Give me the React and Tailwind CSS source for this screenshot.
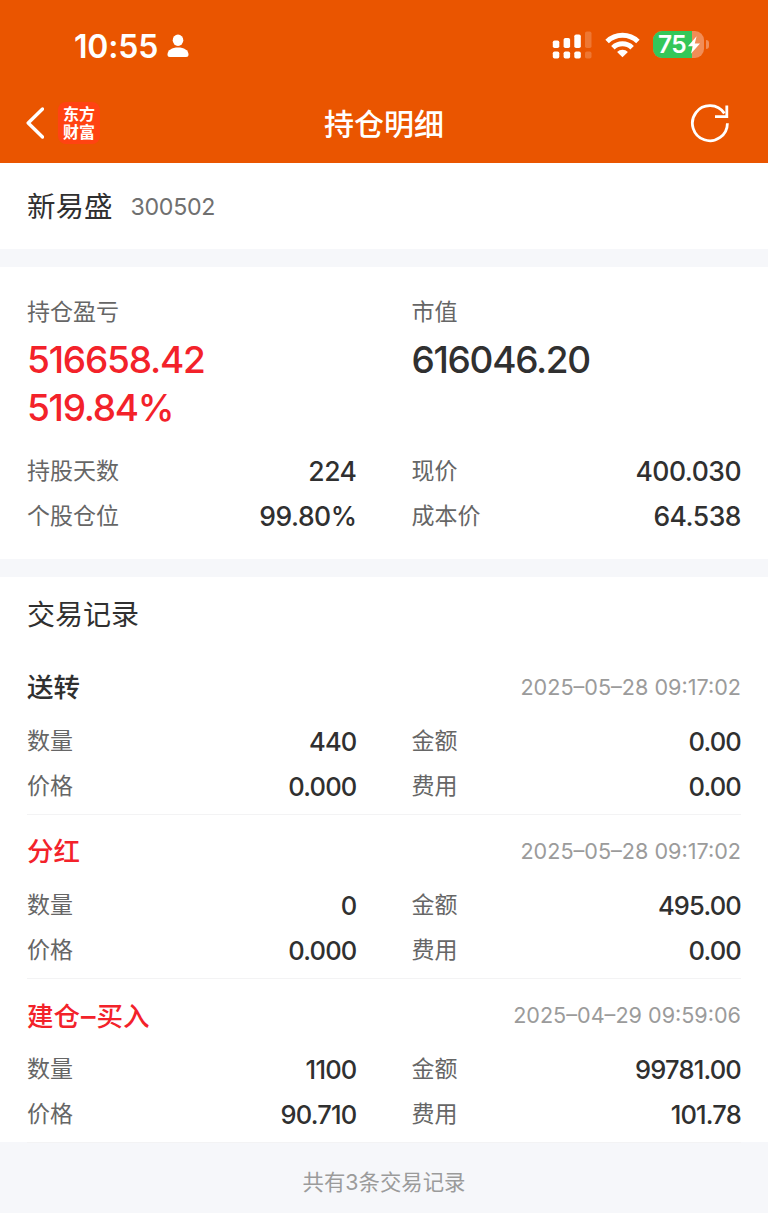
const resumen = [
  { label: '持股天数', valor: '224' },
  { label: '现价', valor: '400.030' },
  { label: '个股仓位', valor: '99.80%' },
  { label: '成本价', valor: '64.538' },
];

const registros = [
  {
    id: 1,
    tipo: '送转',
    rojo: false,
    fecha: '2025–05–28 09:17:02',
    cantidad: '440',
    importe: '0.00',
    precio: '0.000',
    comision: '0.00',
  },
  {
    id: 2,
    tipo: '分红',
    rojo: true,
    fecha: '2025–05–28 09:17:02',
    cantidad: '0',
    importe: '495.00',
    precio: '0.000',
    comision: '0.00',
  },
  {
    id: 3,
    tipo: '建仓–买入',
    rojo: true,
    fecha: '2025–04–29 09:59:06',
    cantidad: '1100',
    importe: '99781.00',
    precio: '90.710',
    comision: '101.78',
  },
];

function StatusBar() {
  return (
    <div className="flex h-[84px] items-center pt-2 pr-[59px] pl-[74px]">
      <span className="pt-px text-[32px] leading-none font-semibold tracking-[-0.2px]">10:55</span>
      <svg className="ml-[9px] h-6 w-[22px]" viewBox="0 0 22 24" fill="currentColor">
        <ellipse cx="11" cy="6.2" rx="5.3" ry="5.7" />
        <path d="M0.5 20.5C0.5 16.3 5 13.6 11 13.6s10.5 2.7 10.5 6.9c0 1.7-.8 2.5-2.4 2.5H2.9C1.3 23 .5 22.2.5 20.5Z" />
      </svg>

      <div className="mb-[3px] ml-auto flex items-center">
        <svg className="h-7 w-10" viewBox="0 0 40 28" fill="currentColor">
          <rect x="0.8" y="9.5" width="6.5" height="7.5" rx="1.8" />
          <rect x="11.6" y="7" width="6.5" height="10" rx="1.8" />
          <rect x="22.3" y="3.5" width="6.5" height="13.5" rx="1.8" />
          <rect x="0.8" y="20.5" width="6.5" height="7" rx="1.8" />
          <rect x="11.6" y="20.5" width="6.5" height="7" rx="1.8" />
          <rect x="22.3" y="20.5" width="6.5" height="7" rx="1.8" />
          <rect x="33" y="0.5" width="6.5" height="16.5" rx="1.8" opacity="0.2" />
          <rect x="33" y="20.5" width="6.5" height="7" rx="1.8" opacity="0.2" />
        </svg>

        <svg className="ml-[13px] h-[26px] w-[35px]" viewBox="0 0 35 26" fill="none">
          <g stroke="currentColor" strokeWidth="5">
            <path d="M2.1 9.5a22.2 22.2 0 0 1 30.8 0" />
            <path d="M7.9 15.8a13.7 13.7 0 0 1 19.2 0" />
          </g>
          <path d="M17.5 25.2l-5.4-5.2a7.7 7.7 0 0 1 10.8 0Z" fill="currentColor" />
        </svg>

        <div className="relative ml-[13px] flex h-[27px] w-[51px] items-center rounded-[9px] bg-[#f18d57]">
          <div className="flex h-full w-[38.5px] items-center rounded-l-[9px] bg-[#34c759] pl-[5px]">
            <span className="text-[24.5px] leading-[27px] font-semibold tracking-[-0.6px]">75</span>
          </div>
          <svg className="absolute top-[5px] left-[34px] h-[18px] w-[14px]" viewBox="0 0 14 18">
            <path d="M9.6 0.3 0.9 10.2h4.9L3.9 17.7 13 7.5H7.8Z" fill="currentColor" />
          </svg>
        </div>
        <div className="ml-[2px] h-[9px] w-[3px] rounded-r-full bg-[#f18d57]" />
      </div>
    </div>
  );
}

function NavBar() {
  return (
    <div className="grid h-[78px] grid-cols-3 items-center px-[38px]">
      <div className="-ml-3 flex items-center">
        <svg className="h-8 w-[18px]" viewBox="0 0 18 32" fill="none" stroke="currentColor">
          <path d="M16.5 2 2.2 16l14.3 14" strokeWidth="3.4" strokeLinecap="round" strokeLinejoin="round" />
        </svg>
        <div className="ml-[14px] flex h-[42px] w-[42px] flex-col items-center justify-center rounded-[8px] bg-[#ff4312] pb-px text-[16px] leading-[18px] font-bold">
          <span>东方</span>
          <span>财富</span>
        </div>
      </div>
      <h1 className="pt-[2px] text-center text-[30px] leading-none font-medium whitespace-nowrap">持仓明细</h1>
      <svg className="ml-auto h-10 w-10" viewBox="0 0 40 40" fill="none" stroke="currentColor" strokeWidth="2.8">
        <path d="M37.4 20.2A17.5 17.5 0 1 1 34.4 10.4" />
        <path d="M36.8 2.4v11.2H25" />
      </svg>
    </div>
  );
}

function Fila({ label, valor, grande }) {
  return (
    <div className="flex h-[45px] items-center justify-between">
      <span className="text-[23px] leading-none text-[#666]">{label}</span>
      <span
        className={
          grande
            ? 'text-[26.5px] leading-none font-medium tracking-[-0.5px] text-[#303030]'
            : 'text-[25.5px] leading-none font-medium tracking-[-0.8px] text-[#303030]'
        }
      >
        {valor}
      </span>
    </div>
  );
}

function Registro({ registro }) {
  const [inicio, fin] = registro.tipo.split('–');

  return (
    <li className="h-[164px] border-b border-[#f3f3f4] pt-1">
      <div className="flex h-16 items-center justify-between">
        <span
          className={
            registro.rojo
              ? 'text-[26.5px] leading-none font-medium text-[#f3222a]'
              : 'text-[26.5px] leading-none font-medium text-[#303030]'
          }
        >
          {inicio}
          {fin && <span className="px-px text-[29px] leading-none">–</span>}
          {fin}
        </span>
        <span className="pt-[2px] text-[21.6px] leading-none text-[#9b9b9b]">{registro.fecha}</span>
      </div>
      <div className="grid grid-cols-2 gap-x-[55px]">
        <Fila label="数量" valor={registro.cantidad} />
        <Fila label="金额" valor={registro.importe} />
        <Fila label="价格" valor={registro.precio} />
        <Fila label="费用" valor={registro.comision} />
      </div>
    </li>
  );
}

export default function App() {
  return (
    <div className="flex h-[1213px] w-[768px] flex-col overflow-hidden bg-[#f6f7fa] font-['Inter','Noto_Sans_CJK_SC',sans-serif] text-[#303030]">
      <header className="h-[163px] bg-[#ea5500] text-white">
        <StatusBar />
        <NavBar />
      </header>

      <section className="flex h-[86px] items-center bg-white px-[27px] pt-[3px]">
        <h2 className="text-[28.5px] leading-none">新易盛</h2>
        <span className="ml-[18px] text-[23.2px] leading-none tracking-[-0.3px] text-[#707070]">300502</span>
      </section>

      {/* Resumen de la posición */}
      <section className="mt-[18px] h-[292px] bg-white px-[27px] pt-[21px]">
        <div className="grid grid-cols-2 gap-x-[55px]">
          <div>
            <p className="text-[23px] leading-[48px] text-[#666]">持仓盈亏</p>
            <p className="text-[37px] leading-[48px] font-medium tracking-[-1.2px] text-[#f3222a]">516658.42</p>
            <p className="text-[37px] leading-[48px] font-medium tracking-[-1.3px] text-[#f3222a]">519.84%</p>
          </div>
          <div>
            <p className="text-[23px] leading-[48px] text-[#666]">市值</p>
            <p className="text-[37px] leading-[48px] font-medium tracking-[-1.3px]">616046.20</p>
          </div>
        </div>
        <div className="mt-[17px] grid grid-cols-2 gap-x-[55px]">
          {resumen.map((item) => (
            <Fila key={item.label} label={item.label} valor={item.valor} grande />
          ))}
        </div>
      </section>

      {/* Movimientos */}
      <section className="mt-[18px] h-[565px] bg-white px-[27px]">
        <h2 className="flex h-[74px] items-center pt-[2px] text-[28px] leading-none">交易记录</h2>
        <ul>
          {registros.map((registro) => (
            <Registro key={registro.id} registro={registro} />
          ))}
        </ul>
      </section>

      <footer className="flex flex-1 items-center justify-center pt-[11px] text-[21.4px] leading-none text-[#9b9b9b]">
        共有3条交易记录
      </footer>
    </div>
  );
}
